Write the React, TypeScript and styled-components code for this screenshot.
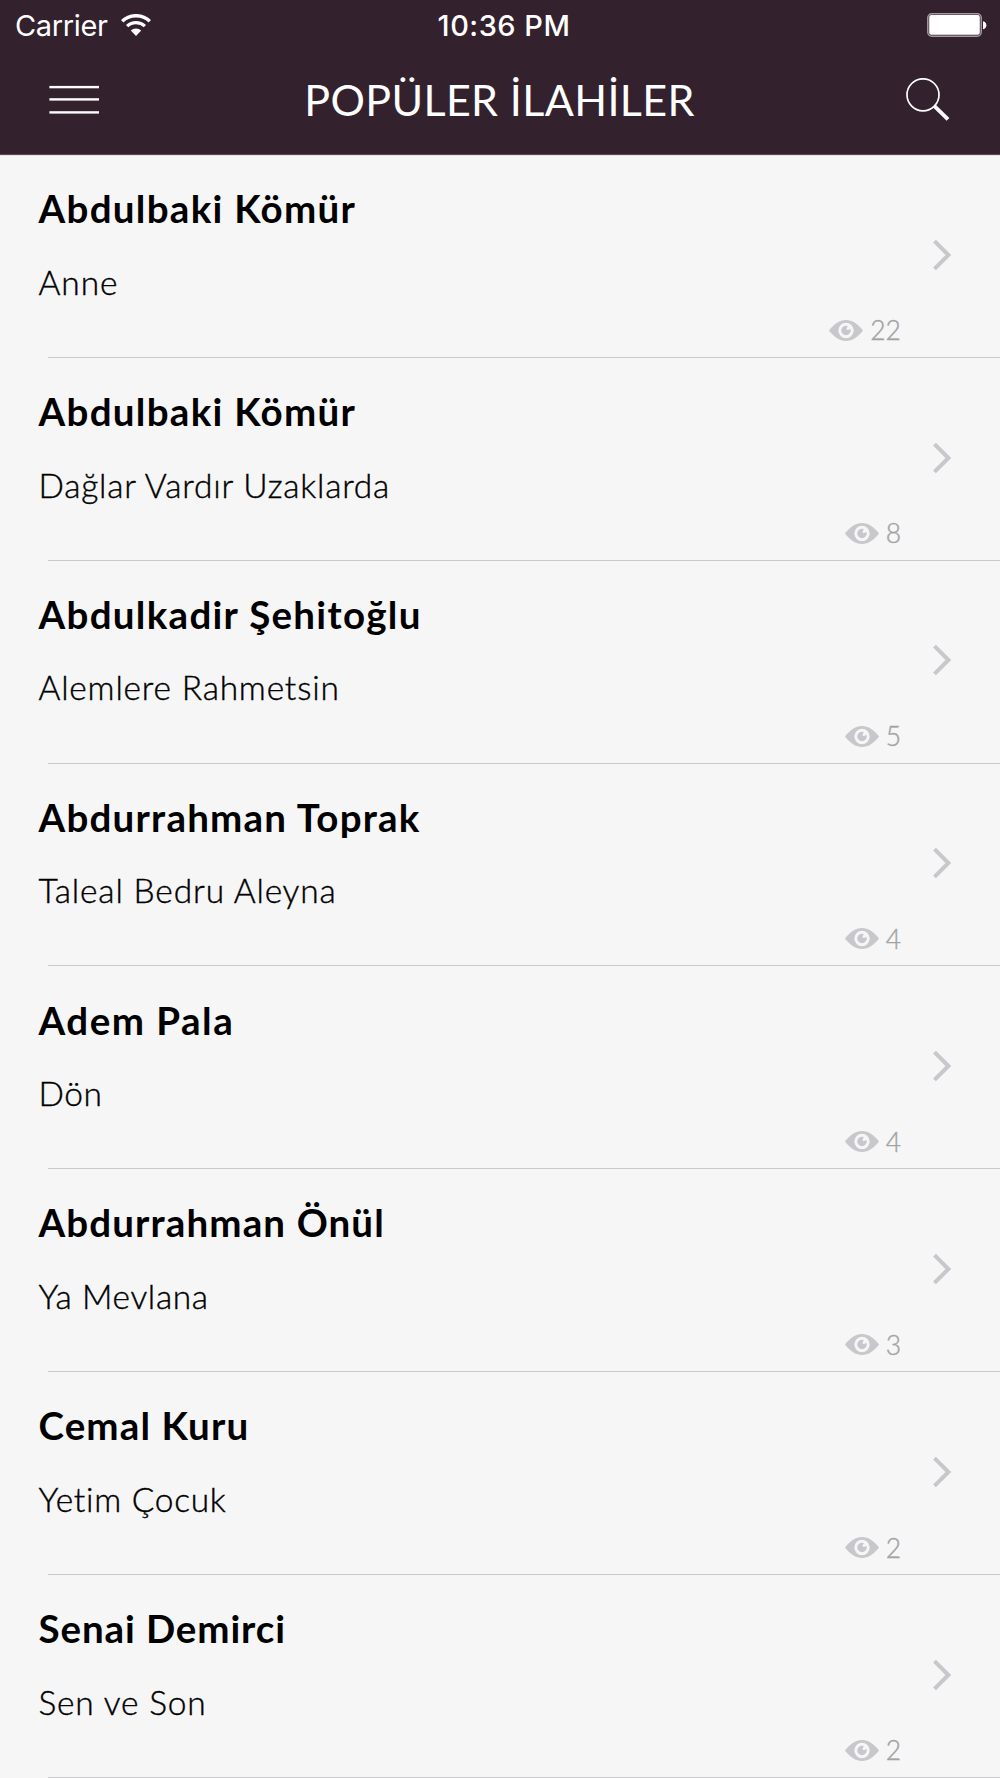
import React from 'react';
import styled, { createGlobalStyle } from 'styled-components';

const GlobalStyle = createGlobalStyle`
  *, *::before, *::after { box-sizing: border-box; }
  body { margin: 0; background: #f6f6f6; }
`;

const Screen = styled.main`
  width: 1000px;
  height: 1778px;
  overflow: hidden;
  background: #f6f6f6;
  font-family: Lato, 'Open Sans', sans-serif;
  color: #000;
`;

const Header = styled.header`
  height: 155px;
  background: #33212d;
  border-bottom: 1px solid #5f4753;
  box-shadow: 0 1px 0 #eddfe4;
  color: #fff;
`;

const StatusBar = styled.div`
  display: grid;
  grid-template-columns: 1fr auto 1fr;
  align-items: center;
  height: 50px;
  padding: 0 13px 0 15px;
  font: 400 29px/48px Inter, sans-serif;
`;

const CarrierGroup = styled.div`
  display: flex;
  align-items: center;
  gap: 13px;
`;

const Carrier = styled.span`
  padding-top: 2px;
  letter-spacing: -0.35px;
`;

const Time = styled.time`
  margin-left: 6px;
  padding-top: 2px;
  font-weight: 500;
  letter-spacing: 0.5px;
`;

const BatteryIcon = styled.svg`
  justify-self: end;
`;

const NavBar = styled.nav`
  display: flex;
  align-items: center;
  justify-content: space-between;
  height: 104px;
  padding: 0 50px 4px 49px;
`;

const IconButton = styled.button`
  display: flex;
  padding: 0;
  border: 0;
  background: none;
`;

const Title = styled.h1`
  margin: 0 5px 0 0;
  font-size: 43px;
  font-weight: 400;
  line-height: 100px;
  letter-spacing: 0.38px;
`;

const List = styled.ul`
  margin: 0;
  padding: 0;
  list-style: none;
`;

const Row = styled.li`
  display: flex;
  flex-direction: column;
  height: 202.86px;
`;

const RowBody = styled.div`
  display: flex;
  flex: 1;
  align-items: center;
`;

const Divider = styled.div`
  height: 1px;
  margin-left: 48px;
  background: #c9c9cb;
`;

const Details = styled.div`
  display: flex;
  flex-direction: column;
  align-self: stretch;
  width: 901px;
  padding: 30.2px 0 0 38.5px;
`;

const Artist = styled.h2<{ $tracking: number }>`
  margin: 0 0 30.5px;
  font-size: 38.5px;
  font-weight: 700;
  line-height: 46px;
  letter-spacing: ${(p) => p.$tracking}px;
`;

const Song = styled.p<{ $tracking: number }>`
  margin: 0 0 12.7px;
  font-size: 33.5px;
  font-weight: 300;
  line-height: 40px;
  letter-spacing: ${(p) => p.$tracking}px;
  -webkit-text-stroke: 0.4px #000;
`;

const Views = styled.div`
  display: flex;
  align-items: center;
  justify-content: flex-end;
  gap: 7px;
  font-size: 26.5px;
  font-weight: 300;
  line-height: 32px;
  color: #a3a3a5;
  -webkit-text-stroke: 0.4px #a3a3a5;
`;

const Chevron = styled.svg`
  margin: 0 0 2.5px 31px;
`;

const hymns = [
  { artist: 'Abdulbaki Kömür', song: 'Anne', views: 22, at: 1.3, st: 0.95 },
  { artist: 'Abdulbaki Kömür', song: 'Dağlar Vardır Uzaklarda', views: 8, at: 1.3, st: 0.77 },
  { artist: 'Abdulkadir Şehitoğlu', song: 'Alemlere Rahmetsin', views: 5, at: 1.3, st: 0.8 },
  { artist: 'Abdurrahman Toprak', song: 'Taleal Bedru Aleyna', views: 4, at: 1.22, st: 0.84 },
  { artist: 'Adem Pala', song: 'Dön', views: 4, at: 1.5, st: 0.6 },
  { artist: 'Abdurrahman Önül', song: 'Ya Mevlana', views: 3, at: 1.12, st: 0.64 },
  { artist: 'Cemal Kuru', song: 'Yetim Çocuk', views: 2, at: 1.12, st: 0.73 },
  { artist: 'Senai Demirci', song: 'Sen ve Son', views: 2, at: 0.9, st: 0.82 },
];

const Wifi = () => (
  <svg width="30" height="23" viewBox="0 0 30 23" fill="none" stroke="#fff">
    <path d="M1.2 7.2 A20 20 0 0 1 28.8 7.2" strokeWidth="3.4" />
    <path d="M6.1 12.2 A12.9 12.9 0 0 1 23.9 12.2" strokeWidth="3.2" />
    <path d="M9.8 16.6 A7.4 7.4 0 0 1 20.2 16.6 L15 22 Z" fill="#fff" stroke="none" />
  </svg>
);

const Battery = () => (
  <BatteryIcon width="60" height="24" viewBox="0 0 60 24">
    <rect x="0.8" y="0.8" width="53.4" height="22.4" rx="4" fill="none" stroke="#fff" strokeOpacity="0.55" strokeWidth="1.5" />
    <rect x="2.2" y="2.1" width="50.6" height="19.6" rx="2" fill="#fff" />
    <path d="M56 8.2 C60.5 9 60.5 15.4 56 16.2 Z" fill="#fff" />
  </BatteryIcon>
);

const Eye = () => (
  <svg width="34" height="21" viewBox="0 0 34 21">
    <path d="M0 10.5 C5.4 3.6 10.6 0 17 0 S28.6 3.6 34 10.5 C28.6 17.4 23.4 21 17 21 S5.4 17.4 0 10.5 Z" fill="#c7c7cc" stroke="none" />
    <circle cx="17" cy="10.5" r="7.7" fill="#f6f6f6" />
    <circle cx="17" cy="10.5" r="4.7" fill="#c7c7cc" />
    <path d="M17.6 9.8 C17.4 8.2 18.2 6.6 19.6 5.6 L22 8 C21 9.4 19.2 10.3 17.6 9.8 Z" fill="#f6f6f6" />
  </svg>
);

export default function App() {
  return (
    <Screen>
      <GlobalStyle />
      <Header>
        <StatusBar>
          <CarrierGroup>
            <Carrier>Carrier</Carrier>
            <Wifi />
          </CarrierGroup>
          <Time>10:36 PM</Time>
          <Battery />
        </StatusBar>
        <NavBar>
          <IconButton aria-label="Menu">
            <svg width="50" height="30" viewBox="0 0 50 30" fill="#fff">
              <rect x="0.4" y="0.9" width="49.6" height="2.4" />
              <rect x="0.4" y="13.2" width="49.6" height="2.4" />
              <rect x="0.4" y="26.2" width="49.6" height="2.4" />
            </svg>
          </IconButton>
          <Title>POPÜLER İLAHİLER</Title>
          <IconButton aria-label="Search">
            <svg width="45" height="44" viewBox="0 0 45 44" fill="none" stroke="#fff">
              <circle cx="18" cy="15.8" r="16" strokeWidth="1.7" transform="translate(0 1)" />
              <path d="M29.2 27.8 L43 41.4" strokeWidth="3.8" />
            </svg>
          </IconButton>
        </NavBar>
      </Header>
      <List>
        {hymns.map((h, i) => (
          <Row key={i}>
            <RowBody>
              <Details>
                <Artist $tracking={h.at}>{h.artist}</Artist>
                <Song $tracking={h.st}>{h.song}</Song>
                <Views>
                  <Eye />
                  {h.views}
                </Views>
              </Details>
              <Chevron width="20" height="32" viewBox="0 0 20 32" fill="none" stroke="#c7c7cc" strokeWidth="4">
                <path d="M2.5 2.1 L16.4 16 L2.5 29.9" />
              </Chevron>
            </RowBody>
            <Divider />
          </Row>
        ))}
      </List>
    </Screen>
  );
}
